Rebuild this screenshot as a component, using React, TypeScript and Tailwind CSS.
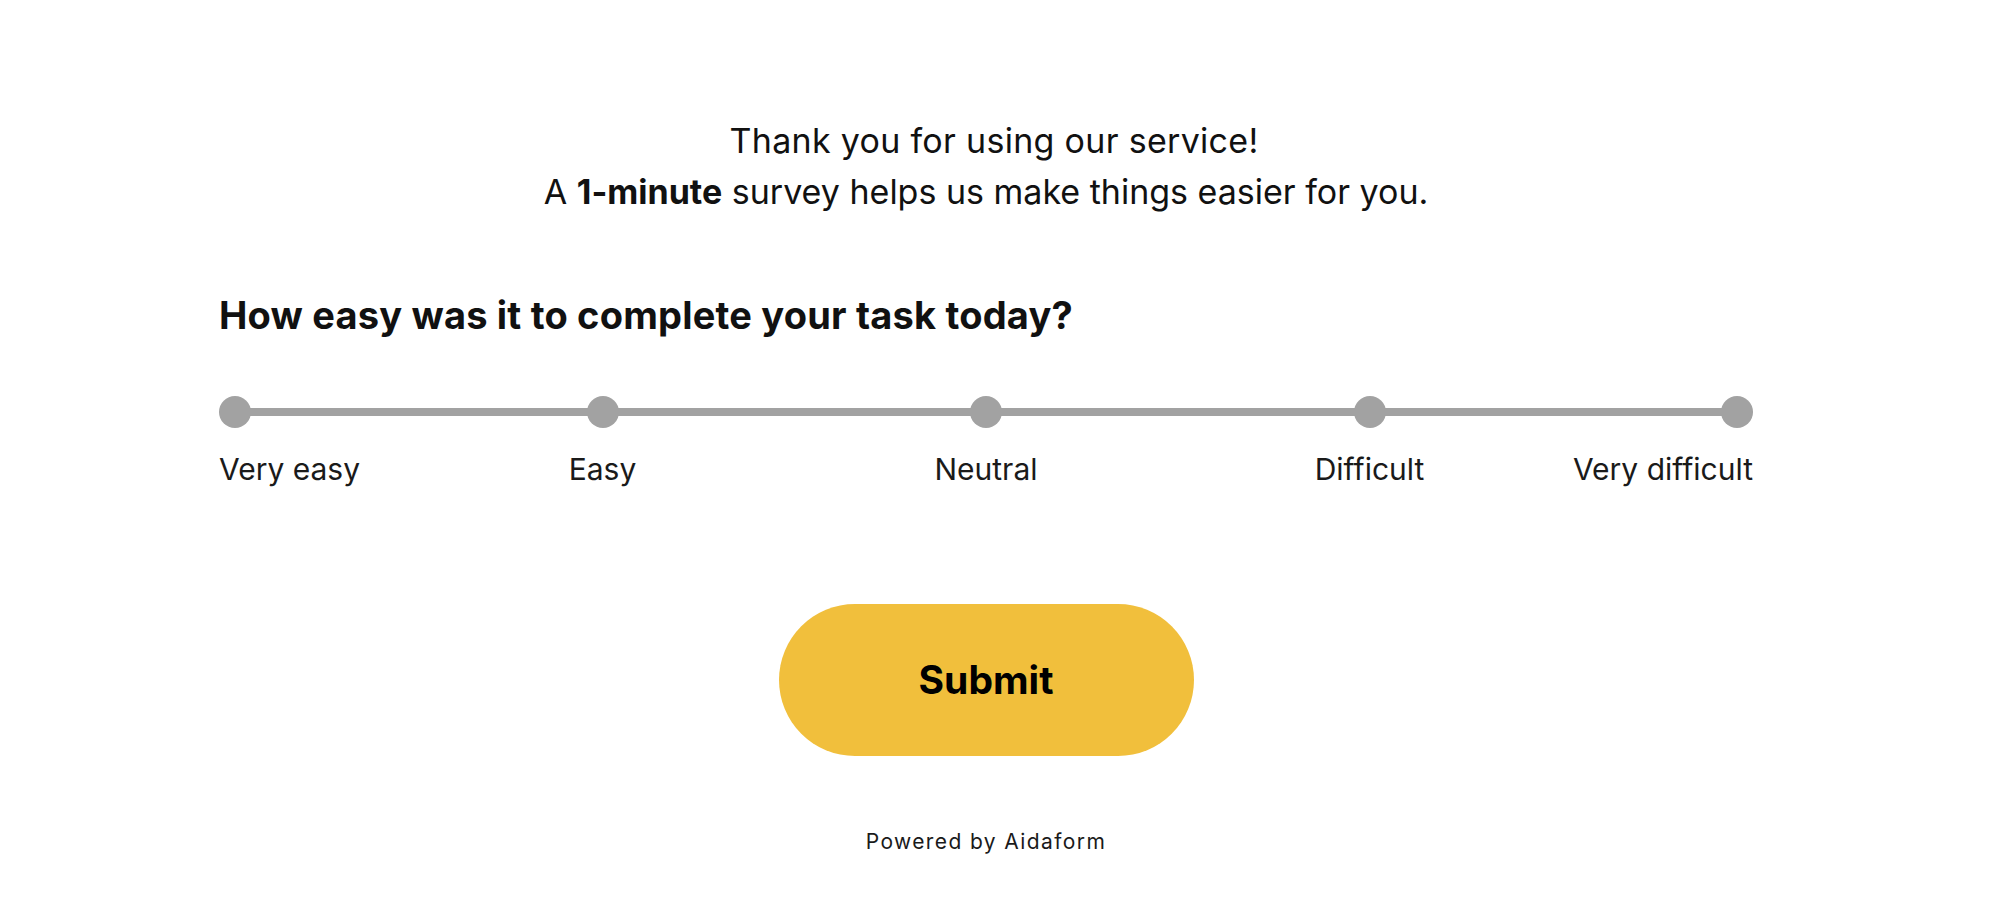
const labels = ["Very easy", "Easy", "Neutral", "Difficult", "Very difficult"];

function Dot() {
    return <div className="w-8 h-8 rounded-full bg-[#a2a2a2]" />;
}

export default function App() {
    return (
        <div className="min-h-[900px] bg-white text-[#111111] font-['Inter','Noto_Sans',sans-serif]">
            <div className="ml-[219px] w-[1534px] pt-[115px]">
                {/* Intro */}
                <div className="text-center text-[34px] leading-[51px]">
                    <p className="pl-4 tracking-[0.3px]">Thank you for using our service!</p>
                    <p>
                        A <span className="font-bold">1-minute</span> survey helps us make things easier for you.
                    </p>
                </div>

                {/* Question */}
                <h2 className="mt-[75px] text-[38px] leading-[46px] font-bold tracking-[0.2px]">
                    How easy was it to complete your task today?
                </h2>

                {/* Scale */}
                <div className="relative mt-[58px] h-8">
                    <div className="absolute left-4 right-4 top-3 h-2 bg-[#a2a2a2]" />
                    <div className="relative grid grid-cols-8 h-8">
                        <div className="col-span-1 flex justify-start"><Dot /></div>
                        <div className="col-span-2 flex justify-center"><Dot /></div>
                        <div className="col-span-2 flex justify-center"><Dot /></div>
                        <div className="col-span-2 flex justify-center"><Dot /></div>
                        <div className="col-span-1 flex justify-end"><Dot /></div>
                    </div>
                </div>
                <div className="mt-[23px] grid grid-cols-8 text-[30px] leading-[36px] text-[#1a1a1a] whitespace-nowrap">
                    <span className="col-span-1 text-left">{labels[0]}</span>
                    <span className="col-span-2 text-center">{labels[1]}</span>
                    <span className="col-span-2 text-center">{labels[2]}</span>
                    <span className="col-span-2 text-center">{labels[3]}</span>
                    <span className="col-span-1 text-right">{labels[4]}</span>
                </div>

                {/* Submit */}
                <div className="mt-[117px] flex justify-center">
                    <button className="w-[415px] h-[152px] rounded-full bg-[#f1bf3c] text-black text-[39px] font-bold">
                        Submit
                    </button>
                </div>

                <p className="mt-[73px] text-center text-[21px] leading-[25px] tracking-[1.4px] text-[#1a1a1a]">Powered by Aidaform</p>
            </div>
        </div>
    );
}
